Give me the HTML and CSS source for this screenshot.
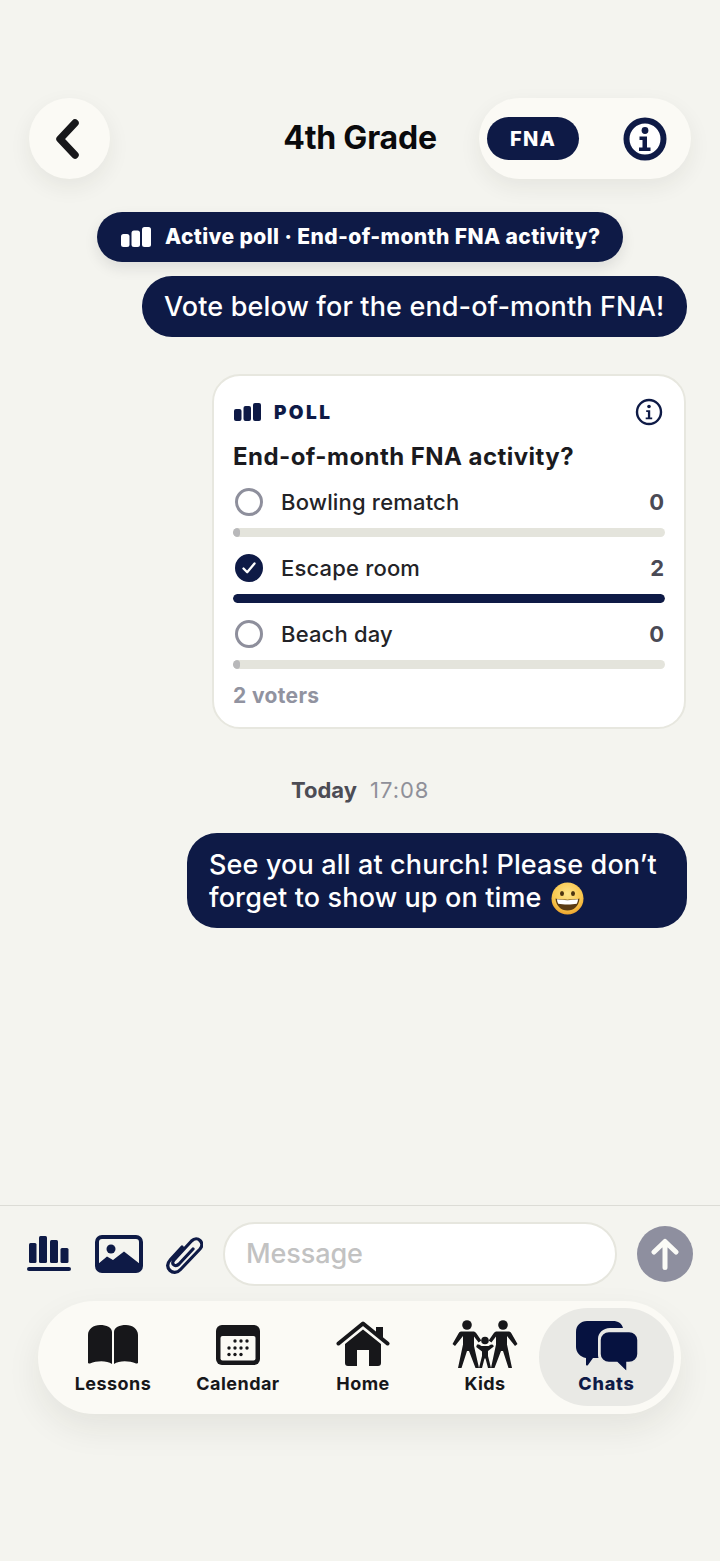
FILE: index.html
```html
<!DOCTYPE html>
<html lang="en">
<head>
<meta charset="utf-8">
<title>4th Grade</title>
<link rel="stylesheet" href="styles.css">
</head>
<body>
<div class="screen">
  <header class="topbar">
    <button class="back" aria-label="Back">
      <svg width="30" height="42" viewBox="0 0 30 42"><path d="M22 5 7 21l15 16" fill="none" stroke="#17171a" stroke-width="7.500" stroke-linecap="round" stroke-linejoin="round"/></svg>
    </button>
    <h1 class="title">4th Grade</h1>
    <div class="actions">
      <span class="tag">FNA</span>
      <svg class="info-big" width="44" height="44" viewBox="0 0 44 44"><circle cx="22" cy="22" r="18.5" fill="#fff" stroke="#0e1a46" stroke-width="6"/><circle cx="22" cy="13.5" r="3.4" fill="#0e1a46"/><path d="M16.500 19.500h7.500v11h3.500v3.500h-11.500v-3.500h3.500v-7.500h-3z" fill="#0e1a46"/></svg>
    </div>
  </header>

  <div class="banner-wrap">
    <div class="banner">
      <svg width="30" height="20" viewBox="0 0 30 20"><g fill="#fff"><rect x="0" y="7" width="8.500" height="13" rx="2.500"/><rect x="10.500" y="3.500" width="8.500" height="16.500" rx="2.500"/><rect x="21" y="0" width="9" height="20" rx="2.500"/></g></svg>
      <span class="banner-text">Active poll · End-of-month FNA activity?</span>
    </div>
  </div>

  <section class="thread">
    <div class="bubble one">Vote below for the end-of-month FNA!</div>

    <article class="poll">
      <div class="poll-head">
        <div class="poll-label">
          <svg width="27" height="18" viewBox="0 0 27 18"><g fill="#0e1a46"><rect x="0" y="6" width="7.500" height="12" rx="2"/><rect x="9.500" y="3" width="7.500" height="15" rx="2"/><rect x="19" y="0" width="8" height="18" rx="2"/></g></svg>
          <span>POLL</span>
        </div>
        <svg class="poll-info" width="28" height="28" viewBox="0 0 28 28"><circle cx="14" cy="14" r="12" fill="none" stroke="#0e1a46" stroke-width="2.400"/><circle cx="14" cy="8.500" r="1.800" fill="#0e1a46"/><path d="M11.200 12.200h4v7.200h2v1.800h-6.500v-1.800h2.200v-5.400h-1.700z" fill="#0e1a46"/></svg>
      </div>
      <h2 class="poll-q">End-of-month FNA activity?</h2>

      <div class="option">
        <div class="opt-row"><span class="radio"></span><span class="opt-name">Bowling rematch</span><span class="opt-count">0</span></div>
        <div class="track"><div class="fill empty"></div></div>
      </div>
      <div class="option">
        <div class="opt-row">
          <span class="radio checked"><svg width="16" height="14" viewBox="0 0 16 14"><path d="m2.500 7.500 3.700 3.800L13.500 2.500" fill="none" stroke="#fff" stroke-width="2.300" stroke-linecap="round" stroke-linejoin="round"/></svg></span>
          <span class="opt-name">Escape room</span><span class="opt-count">2</span>
        </div>
        <div class="track"><div class="fill full"></div></div>
      </div>
      <div class="option">
        <div class="opt-row"><span class="radio"></span><span class="opt-name">Beach day</span><span class="opt-count">0</span></div>
        <div class="track"><div class="fill empty"></div></div>
      </div>
      <div class="voters">2 voters</div>
    </article>

    <div class="stamp"><b>Today</b><span>17:08</span></div>

    <div class="bubble two">See you all at church! Please don’t forget to show up on time
      <svg class="emoji" width="33" height="33" viewBox="0 0 33 33" aria-label="grinning face"><defs><radialGradient id="face" cx="50%" cy="35%" r="70%"><stop offset="0" stop-color="#fde48a"/><stop offset=".65" stop-color="#f9c64c"/><stop offset="1" stop-color="#e89a26"/></radialGradient></defs><circle cx="16.500" cy="16.500" r="16" fill="url(#face)"/><ellipse cx="11" cy="11.500" rx="2" ry="2.500" fill="#4c3410"/><ellipse cx="22" cy="11.500" rx="2" ry="2.500" fill="#4c3410"/><path d="M4.500 16.500c4 1.500 20 1.500 24 0-.5 7.500-5.500 12-12 12s-11.500-4.500-12-12z" fill="#5a3a12"/><path d="M6 17.300c5 1.100 16 1.100 21 0-.1 2-.6 3.400-1.200 4.400-5 1-13.600 1-18.600 0-.6-1-1.100-2.400-1.200-4.400z" fill="#fff"/></svg>
    </div>
  </section>

  <footer class="dock">
    <div class="composer">
      <div class="tools">
        <svg width="44" height="36" viewBox="0 0 44 36"><g fill="#0e1a46"><rect x="2" y="7" width="7.500" height="20" rx="1.500"/><rect x="12" y="0" width="8" height="27" rx="1.500"/><rect x="23" y="4" width="8" height="23" rx="1.500"/><rect x="33.500" y="12" width="8" height="15" rx="1.500"/><rect x="0" y="31" width="44" height="4" rx="2"/></g></svg>
        <svg width="48" height="38" viewBox="0 0 48 38"><rect x="2" y="2" width="44" height="34" rx="5" fill="#f4f4ef" stroke="#0e1a46" stroke-width="4"/><circle cx="16" cy="14" r="4.500" fill="#0e1a46"/><path d="M3 34v-5l9-7.500 6 3.500 11-8.500L45 29v5z" fill="#0e1a46"/></svg>
        <svg width="38" height="42" viewBox="0 0 38 42"><path d="M17 14 5.500 26.500c-4 4.500-3 8.500-.5 11s7 3 10.500-1L35 16c3-3.500 2-6.500 0-8.500-2-2-5.500-2.500-8.500.5L9 27c-2 2.500-1.500 4 0 5s3.500.5 5-1l14-15" fill="none" stroke="#0e1a46" stroke-width="3.200" stroke-linecap="round" stroke-linejoin="round"/></svg>
      </div>
      <div class="field">Message</div>
      <button class="send" aria-label="Send">
        <svg width="28" height="32" viewBox="0 0 28 32"><path d="M14 29.500V3.500M3 14 14 3.500 25 14" fill="none" stroke="#fbfbf7" stroke-width="5" stroke-linecap="round" stroke-linejoin="round"/></svg>
      </button>
    </div>

    <nav class="tabbar">
      <a class="tab lessons">
        <svg width="50" height="40" viewBox="0 0 50 40"><path d="M24 7v32c-5-3.500-15-3.500-22-.5-1 .3-2-.2-2-1V10C0 4 5.500 0 12 0s12 2.500 12 7zM26 7v32c5-3.500 15-3.500 22-.5 1 .3 2-.2 2-1V10c0-6-5.500-10-12-10S26 2.500 26 7z" fill="#17171a"/></svg>
        <span>Lessons</span>
      </a>
      <a class="tab calendar">
        <svg width="44" height="40" viewBox="0 0 44 40"><rect width="44" height="40" rx="6" fill="#17171a"/><rect x="4.500" y="11" width="35" height="24.500" rx="2" fill="#fbfaf5"/><g fill="#17171a"><circle cx="19" cy="16" r="1.700"/><circle cx="25" cy="16" r="1.700"/><circle cx="31" cy="16" r="1.700"/><circle cx="13" cy="23" r="1.700"/><circle cx="19" cy="23" r="1.700"/><circle cx="25" cy="23" r="1.700"/><circle cx="31" cy="23" r="1.700"/><circle cx="13" cy="29.500" r="1.700"/><circle cx="19" cy="29.500" r="1.700"/><circle cx="25" cy="29.500" r="1.700"/></g></svg>
        <span>Calendar</span>
      </a>
      <a class="tab home">
        <svg width="54" height="46" viewBox="0 0 54 46"><path d="M2.500 22.500 27 2.500l24.500 20" fill="none" stroke="#17171a" stroke-width="4" stroke-linecap="round" stroke-linejoin="round"/><path d="M40 6h7v13l-7-6z" fill="#17171a"/><path fill-rule="evenodd" d="M27 8.500 45 23v19a3 3 0 0 1-3 3H12a3 3 0 0 1-3-3V23zM21 29v16h12V29z" fill="#17171a"/></svg>
        <span>Home</span>
      </a>
      <a class="tab kids">
        <svg width="66" height="50" viewBox="0 0 66 50"><g fill="#17171a"><circle cx="15" cy="5" r="4.800"/><circle cx="51" cy="5" r="4.800"/><circle cx="33" cy="20.500" r="3.800"/><path d="M9 11.500h12c1.500 0 2.500.6 3.300 1.700l5 7.300-2.700 2-4.600-6v9.500L27 48h-3.500L17 31h-2L9.500 48H6l5-23.500V16L3 26l-2.500-2 6-10.500c.6-1.300 1.500-2 2.500-2z"/><path d="M45 11.500h12c1 0 1.900.7 2.500 2l6 10.500-2.500 2-8-10v8.500L60 48h-3.500L51 31h-2l-6.500 17H39l5-23.500V16.500l-4.600 6-2.700-2 5-7.300c.8-1.100 1.800-1.700 3.300-1.700z"/><path d="M25 24.500l2 .1 2.500 1.400h7l2.500-1.400 2 .1.800 1.800-5.800 4.500V36l3 12H36l-2.500-9.500h-1L30 48h-3l3-12v-4.500l-5.800-4.500z"/></g></svg>
        <span>Kids</span>
      </a>
      <a class="tab chats">
        <svg width="62" height="50" viewBox="0 0 62 50"><path d="M11 0h26c5 0 9 2.500 10 7H34c-7 0-12 5-12 11v16c0 1 .2 2 .5 3H17l-5 7c-.8 1-2 .6-2-.6V37C4 36 0 31 0 26V11C0 4 5 0 11 0z" fill="#061240"/><path d="M33 10.500h20c5 0 9 3.500 9 8.500v14c0 5-4 8.500-9 8.500h-2v7.500c0 1-.8 1.300-1.500.8L41 41.500h-8c-5 0-9-3.500-9-8.500V19c0-5 4-8.500 9-8.500z" fill="#061240" stroke="#e9e9e5" stroke-width="1.500"/></svg>
        <span>Chats</span>
      </a>
    </nav>
  </footer>
</div>
</body>
</html>
```
FILE: styles.css
```css
* { box-sizing: border-box; }

html, body { margin: 0; padding: 0; }

body {
  background: #f4f4ef;
  font-family: Inter, "Liberation Sans", sans-serif;
  color: #17171a;
}

.screen {
  width: 720px;
  height: 1561px;
  display: flex;
  flex-direction: column;
  overflow: hidden;
  padding-top: 98px;
}

/* Header */
.topbar {
  position: relative;
  height: 81px;
  margin: 0 29px;
  display: flex;
  align-items: center;
  justify-content: space-between;
}

.back {
  width: 81px;
  height: 81px;
  border: 0;
  border-radius: 50%;
  padding: 0 4px 0 0;
  background: #fbfaf5;
  box-shadow: 0 8px 22px rgba(40, 40, 30, .07);
  display: flex;
  align-items: center;
  justify-content: center;
}

.title {
  position: absolute;
  left: 0;
  right: 0;
  top: 20px;
  margin: 0;
  text-align: center;
  font-size: 32px;
  line-height: 40px;
  font-weight: 700;
  letter-spacing: -.2px;
  color: #0a0a0c;
  pointer-events: none;
}

.actions {
  width: 212px;
  height: 81px;
  padding: 0 24px 0 8px;
  border-radius: 41px;
  background: #fbfaf5;
  box-shadow: 0 8px 22px rgba(40, 40, 30, .07);
  display: flex;
  align-items: center;
  justify-content: space-between;
}

.tag {
  width: 92px;
  height: 43px;
  border-radius: 22px;
  background: #0e1a46;
  color: #fff;
  font-size: 20px;
  font-weight: 800;
  letter-spacing: 1.2px;
  display: flex;
  align-items: center;
  justify-content: center;
}

/* Active poll banner */
.banner-wrap {
  display: flex;
  justify-content: flex-start;
  padding: 33px 0 0 97px;
}

.banner {
  width: 526px;
  height: 50px;
  padding-left: 24px;
  border-radius: 25px;
  background: #0e1a46;
  color: #fff;
  font-size: 21px;
  font-weight: 800;
  letter-spacing: .4px;
  box-shadow: 0 6px 14px rgba(30, 30, 40, .1);
  display: flex;
  align-items: center;
  gap: 14px;
  white-space: nowrap;
}

.banner-text { padding-bottom: 2px; }

/* Thread */
.thread {
  flex: 1;
  padding: 14px 33px 0 0;
  display: flex;
  flex-direction: column;
  align-items: flex-end;
}

.bubble {
  background: #0e1a46;
  color: #fff;
  font-size: 27px;
  font-weight: 500;
  letter-spacing: .14px;
  line-height: 33px;
}

.bubble.one {
  width: 545px;
  height: 61px;
  padding: 14px 0 0 22px;
  border-radius: 30px;
  white-space: nowrap;
}

.bubble.two {
  width: 500px;
  height: 95px;
  margin-top: 29px;
  padding: 15px 20px 0 22px;
  border-radius: 30px;
}

.emoji {
  vertical-align: -8px;
  margin-left: 2px;
}

/* Poll card */
.poll {
  width: 474px;
  height: 355px;
  margin: 37px 1px 0 0;
  padding: 22px 19px 0 19px;
  border: 2px solid #e7e7df;
  border-radius: 28px;
  background: #fff;
}

.poll-head {
  height: 28px;
  display: flex;
  align-items: center;
  justify-content: space-between;
}

.poll-info { margin-right: 2px; }

.poll-label {
  display: flex;
  align-items: center;
  gap: 13px;
  padding-left: 1px;
  color: #0e1a46;
  font-size: 19px;
  font-weight: 900;
  letter-spacing: 2.400px;
}

.poll-q {
  margin: 16px 0 0;
  font-size: 24px;
  line-height: 30px;
  font-weight: 700;
  color: #1a1a1e;
  letter-spacing: .45px;
}

.option { margin-top: 16px; }
.poll-q + .option { margin-top: 15px; }

.opt-row {
  height: 30px;
  padding: 0 1px 0 2px;
  display: flex;
  align-items: center;
}

.radio {
  width: 28px;
  height: 28px;
  border: 3px solid #8e8f9c;
  border-radius: 50%;
  display: flex;
  align-items: center;
  justify-content: center;
  flex: none;
}

.radio.checked {
  background: #0e1a46;
  border-color: #0e1a46;
}

.opt-name {
  flex: 1;
  margin-left: 18px;
  font-size: 22px;
  font-weight: 500;
  letter-spacing: .18px;
  color: #232327;
}

.opt-count {
  font-size: 22px;
  font-weight: 700;
  color: #4a4a55;
}

.track {
  height: 9px;
  margin-top: 11px;
  border-radius: 5px;
  background: #e4e4dc;
  overflow: hidden;
}

.fill { height: 100%; border-radius: 5px; }
.fill.empty { width: 7px; background: #b8b8ba; }
.fill.full { width: 100%; background: #0e1a46; }

.voters {
  margin-top: 14px;
  font-size: 21px;
  font-weight: 700;
  letter-spacing: .35px;
  color: #9193a0;
}

.stamp {
  align-self: flex-start;
  margin: 47px 0 0 291px;
  height: 28px;
  display: flex;
  align-items: center;
  gap: 13px;
  font-size: 22px;
  color: #8f9099;
}

.stamp b {
  font-weight: 700;
  color: #4c4c55;
}

.stamp span { letter-spacing: 1px; }

/* Bottom dock */
.dock {
  flex: none;
  height: 356px;
  border-top: 1px solid #dcdcd6;
}

.composer {
  height: 95px;
  padding: 0 27px;
  display: flex;
  align-items: center;
}

.tools {
  width: 196px;
  display: flex;
  align-items: center;
  gap: 24px;
}

.tools svg:last-child { margin-left: -2px; }

.field {
  width: 394px;
  height: 64px;
  padding-left: 21px;
  border: 2px solid #e6e6de;
  border-radius: 32px;
  background: #fff;
  color: #c2c2c2;
  font-size: 27px;
  font-weight: 500;
  letter-spacing: -.1px;
  display: flex;
  align-items: center;
}

.send {
  width: 56px;
  height: 56px;
  margin-left: 20px;
  padding: 0;
  border: 0;
  border-radius: 50%;
  background: #8e8f9f;
  display: flex;
  align-items: center;
  justify-content: center;
}

.tabbar {
  width: 643px;
  height: 113px;
  margin-left: 38px;
  border-radius: 57px;
  background: #fbfaf5;
  box-shadow: 0 14px 34px rgba(40, 40, 30, .08);
  display: grid;
  grid-template-columns: 150px 100px 150px 94px 142px;
}

.tab {
  position: relative;
  height: 113px;
  padding-top: 24px;
  display: flex;
  flex-direction: column;
  align-items: center;
  font-size: 18px;
  font-weight: 700;
  letter-spacing: .45px;
  color: #17171a;
}

.tab svg { flex: none; }

.tab span {
  position: absolute;
  top: 71px;
  line-height: 24px;
}

.tab.home { padding-top: 20px; }
.tab.kids { padding-top: 19px; }

.tab.chats {
  width: 135px;
  height: 98px;
  margin: 7px 0 0 7px;
  padding-top: 13px;
  border-radius: 49px;
  background: #e9e9e5;
  color: #0e1a46;
  font-weight: 800;
  letter-spacing: .8px;
}

.tab.chats span { top: 64px; }
```
